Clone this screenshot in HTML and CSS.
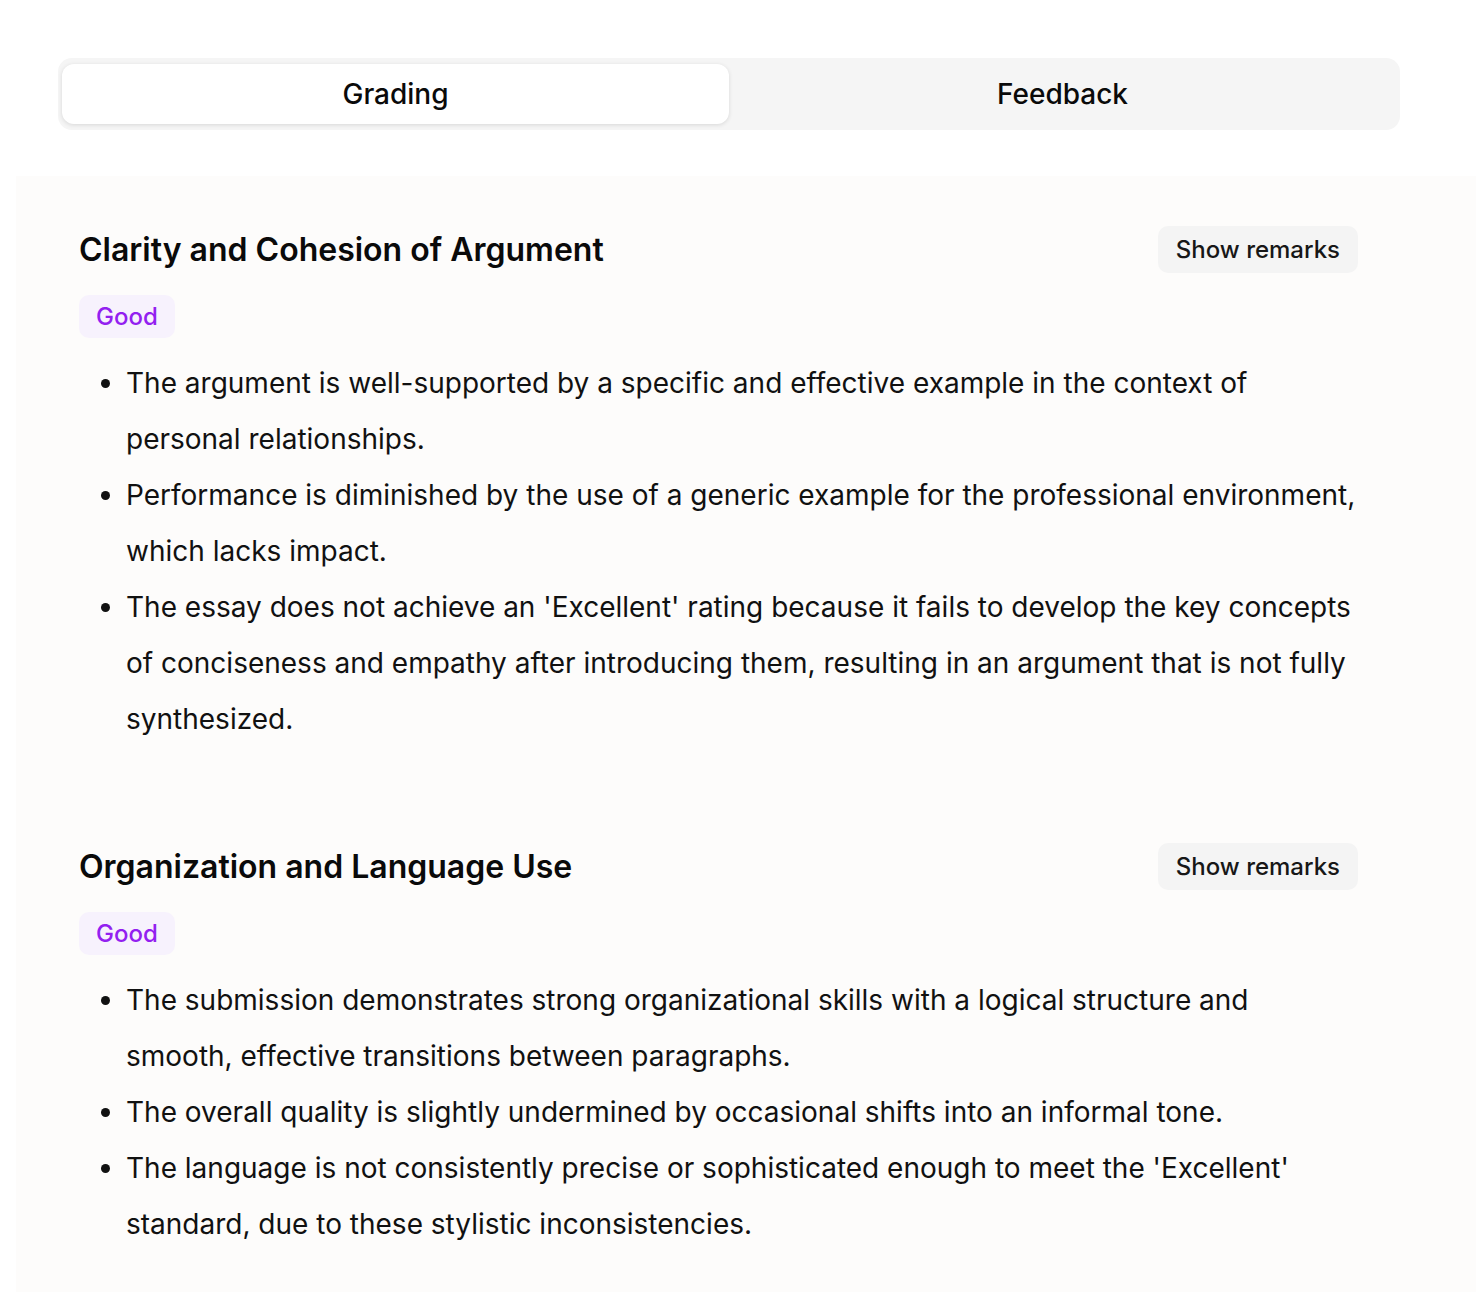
FILE: index.html
```html
<!DOCTYPE html>
<html lang="en">
<head>
    <meta charset="UTF-8">
    <meta name="viewport" content="width=device-width, initial-scale=1.0">
    <title>Grading</title>
    <link rel="stylesheet" href="styles.css">
</head>
<body>
    <div class="tabs">
        <button class="tab active">Grading</button>
        <button class="tab">Feedback</button>
    </div>

    <div class="grading">
        <section class="criterion">
            <div class="criterion-head">
                <h2>Clarity and Cohesion of Argument</h2>
                <button class="remarks-btn">Show remarks</button>
            </div>
            <span class="badge">Good</span>
            <ul class="points">
                <li>The argument is well-supported by a specific and effective example in the context of personal relationships.</li>
                <li>Performance is diminished by the use of a generic example for the professional environment, which lacks impact.</li>
                <li>The essay does not achieve an 'Excellent' rating because it fails to develop the key concepts of conciseness and empathy after introducing them, resulting in an argument that is not fully synthesized.</li>
            </ul>
        </section>

        <section class="criterion">
            <div class="criterion-head">
                <h2>Organization and Language Use</h2>
                <button class="remarks-btn">Show remarks</button>
            </div>
            <span class="badge">Good</span>
            <ul class="points">
                <li>The submission demonstrates strong organizational skills with a logical structure and smooth, effective transitions between paragraphs.</li>
                <li>The overall quality is slightly undermined by occasional shifts into an informal tone.</li>
                <li>The language is not consistently precise or sophisticated enough to meet the 'Excellent' standard, due to these stylistic inconsistencies.</li>
            </ul>
        </section>
    </div>
</body>
</html>
```

FILE: styles.css
```css
body {
    font-family: Inter, "Noto Sans", sans-serif;
    margin: 0;
    padding: 0;
    background-color: #fff;
    color: #0a0a0a;
}

.tabs {
    display: flex;
    width: 1342px;
    margin: 58px 0 0 58px;
    padding: 6px 4px;
    box-sizing: border-box;
    background-color: #f5f5f5;
    border-radius: 14px;
}

.tab {
    flex: 1;
    height: 60px;
    border: none;
    background: none;
    border-radius: 12px;
    font-family: inherit;
    font-size: 28px;
    font-weight: 500;
    color: #0a0a0a;
    cursor: pointer;
}

.tab.active {
    background-color: #fff;
    box-shadow: 0 1px 4px rgba(0, 0, 0, 0.12);
}

.grading {
    margin: 46px 0 0 16px;
    padding: 50px 118px 40px 63px;
    background-color: #fdfcfb;
}

.criterion {
    margin-bottom: 96px;
}

.criterion:last-child {
    margin-bottom: 0;
}

.criterion-head {
    display: flex;
    justify-content: space-between;
    align-items: center;
}

.criterion-head h2 {
    margin: 0;
    font-size: 32px;
    font-weight: 600;
}

.remarks-btn {
    height: 47px;
    padding: 0 18px;
    border: none;
    border-radius: 10px;
    background-color: #f4f4f4;
    font-family: inherit;
    font-size: 24px;
    font-weight: 500;
    color: #171717;
    cursor: pointer;
}

.badge {
    display: inline-block;
    margin-top: 22px;
    padding: 0 17px;
    line-height: 43px;
    border-radius: 10px;
    background-color: #f7f2fd;
    color: #9320f0;
    font-size: 24px;
    font-weight: 500;
}

.points {
    margin: 17px 0 0;
    padding-left: 47px;
    font-size: 28px;
    line-height: 56px;
    color: #111;
}
```
